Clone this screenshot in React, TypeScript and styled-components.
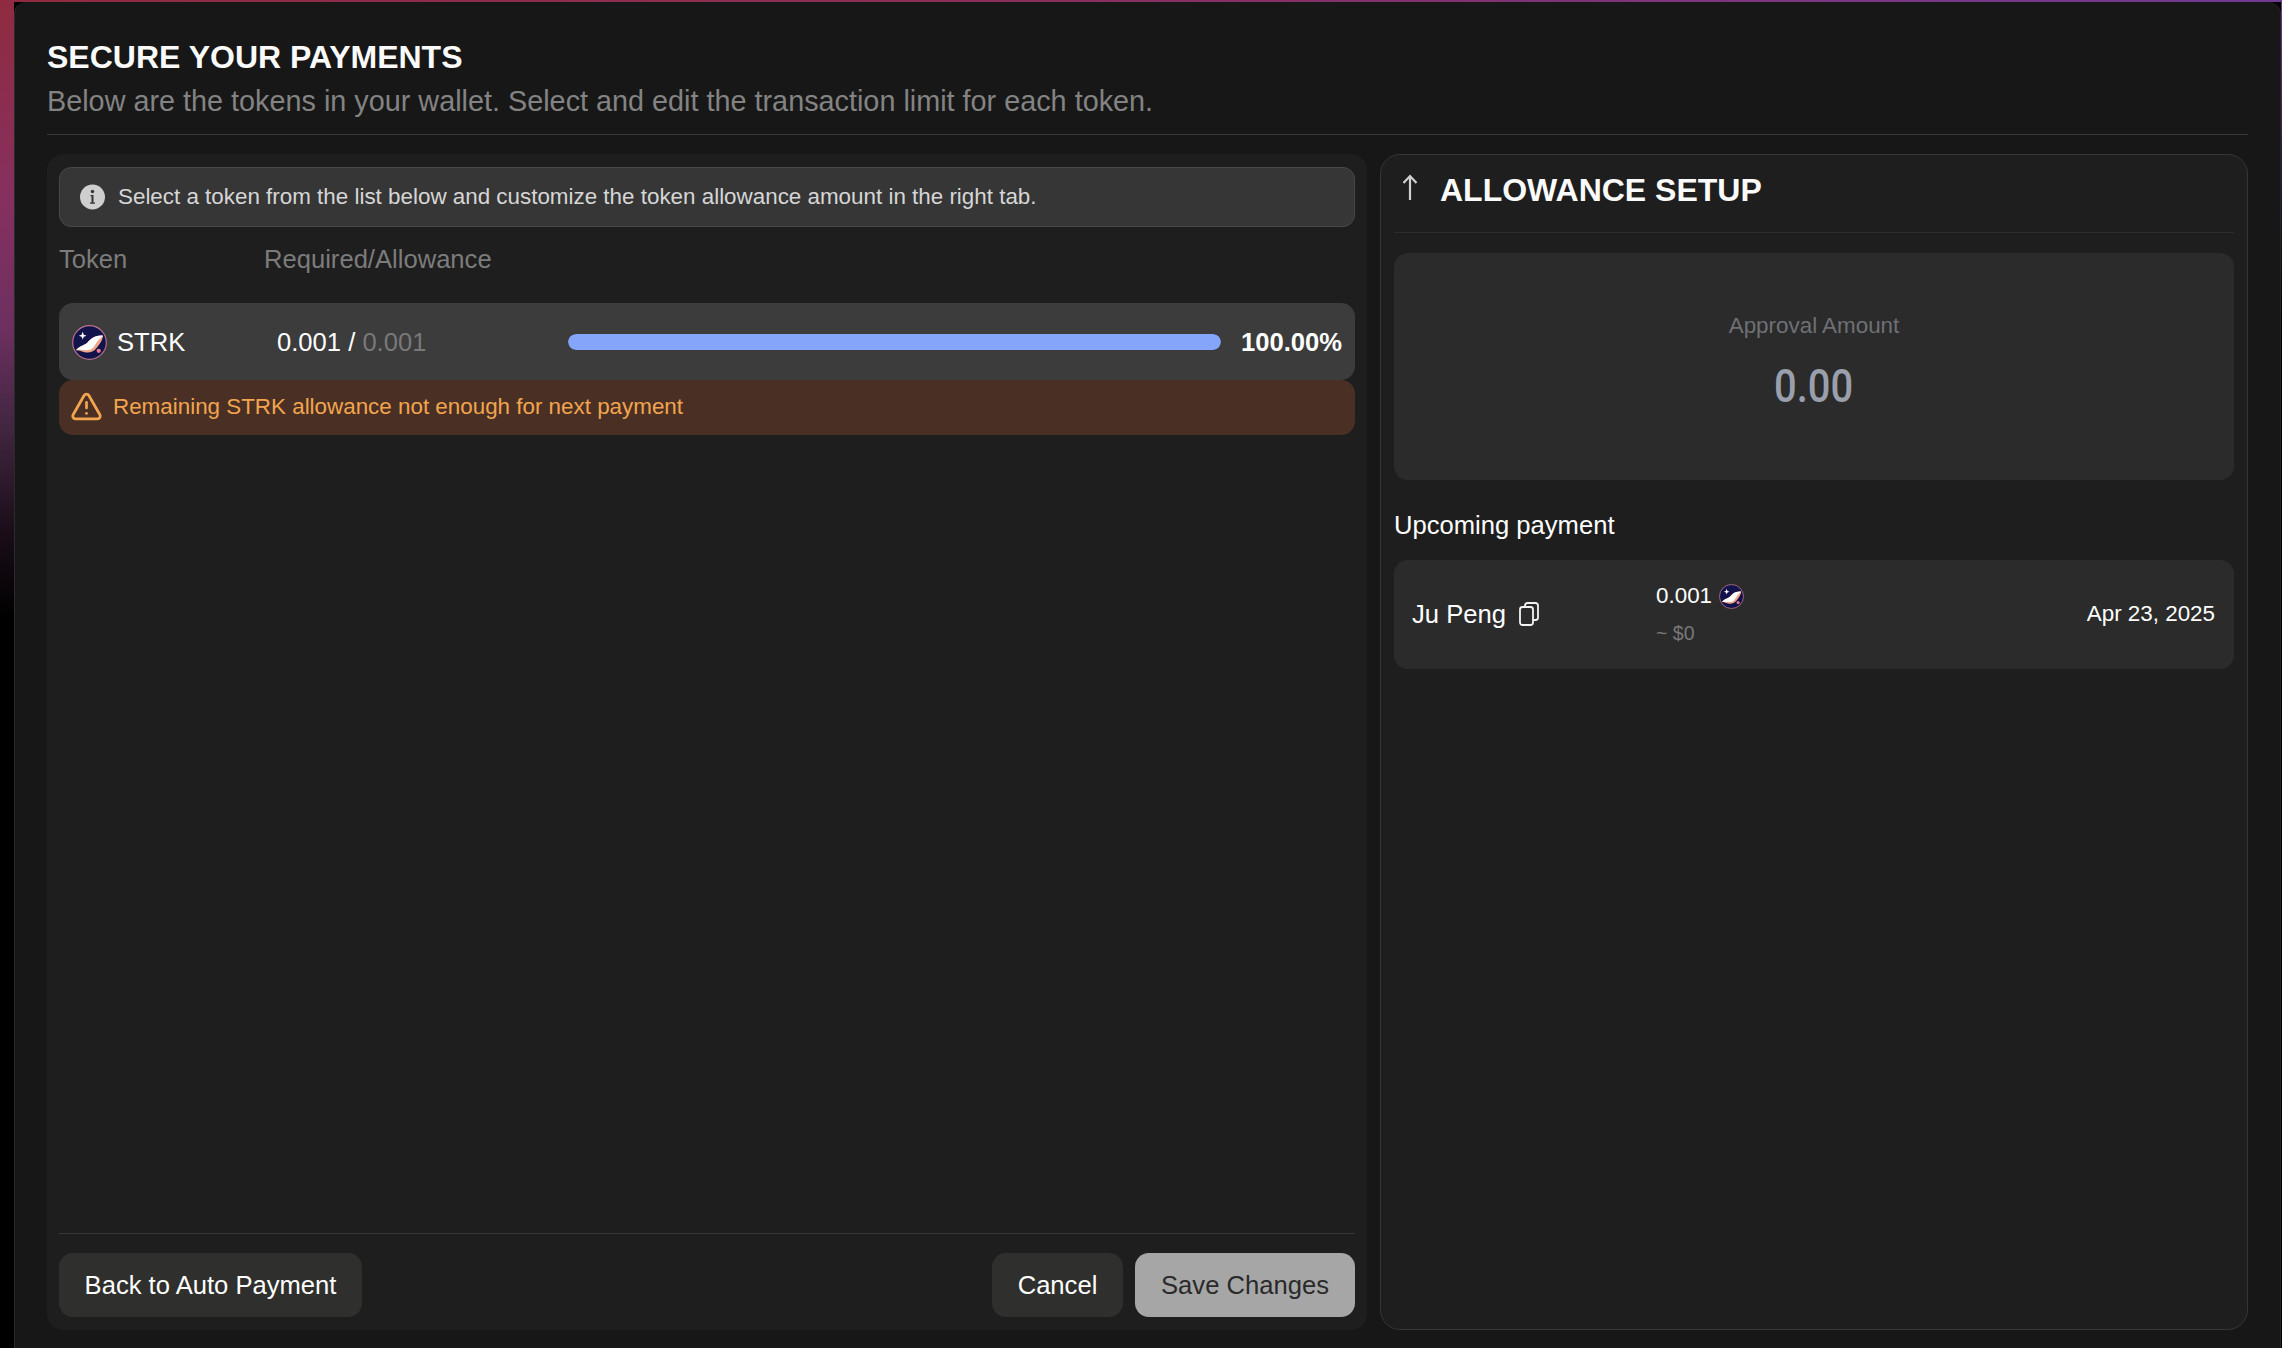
import React from "react";
import styled, { createGlobalStyle } from "styled-components";
import { TriangleAlert } from "lucide-react";

const Global = createGlobalStyle`
  html, body { margin: 0; padding: 0; height: 100%; background: #000; overflow: hidden; }
  body { font-family: "Liberation Sans", Arial, sans-serif; }
  * { box-sizing: border-box; }
`;

const Desktop = styled.div`
  width: 2282px;
  height: 1348px;
  padding: 2px 1px 0 14px;
  overflow: hidden;
  background:
    linear-gradient(90deg, #8f2b40 0%, #8c2f58 40%, #7f3478 70%, #6f3a93 100%) top / 100% 2px no-repeat,
    linear-gradient(180deg, #6f3a93 0, #2a1636 180px, #000 340px) right / 1px 100% no-repeat,
    linear-gradient(180deg, #8f2b40 0, #86305f 200px, #6c3060 330px, #40263f 430px, #1a0d18 533px, #000 620px) left / 14px 100% no-repeat,
    #000;
`;

const Modal = styled.main`
  height: 1346px;
  padding: 0 32px;
  background: #171717;
  border-left: 1px solid #2a2a2a;
  border-right: 1px solid #242424;
  border-radius: 12px 12px 0 0;
  display: flex;
  flex-direction: column;
`;

const Header = styled.header`
  height: 133px;
  padding-top: 35px;
  border-bottom: 1px solid #3a3a3a;
  flex: none;
`;

const Title = styled.h1`
  margin: 0;
  font-size: 32px;
  line-height: 40px;
  font-weight: 700;
  color: #fafafa;
`;

const Subtitle = styled.p`
  margin: 6px 0 0;
  font-size: 28.8px;
  line-height: 36px;
  color: #838383;
`;

const Columns = styled.div`
  margin-top: 19px;
  height: 1176px;
  display: grid;
  grid-template-columns: 1320px 868px;
  column-gap: 13px;
`;

const LeftPanel = styled.section`
  background: #1e1e1e;
  border-radius: 16px;
  padding: 13px 12px 13px;
  display: flex;
  flex-direction: column;
`;

const InfoBox = styled.div`
  height: 60px;
  background: #363636;
  border: 1px solid #484848;
  border-radius: 12px;
  padding: 0 20px;
  display: flex;
  align-items: center;
  gap: 13px;
  font-size: 22.4px;
  color: #d6d6d6;
`;

const TableHead = styled.div`
  margin-top: 15px;
  height: 34px;
  display: flex;
  font-size: 25.6px;
  line-height: 34px;
  color: #7c7c7c;
`;

const HeadCell = styled.div<{ $width?: number }>`
  width: ${(p) => (p.$width ? `${p.$width}px` : "auto")};
`;

const TokenRow = styled.div`
  margin-top: 27px;
  height: 77px;
  background: #3c3c3c;
  border-radius: 14px;
  padding: 1px 13px 0;
  display: flex;
  align-items: center;
  color: #fff;
  font-size: 25.6px;
`;

const TokenName = styled.div`
  width: 205px;
  display: flex;
  align-items: center;
  gap: 10px;
`;

const Amount = styled.div`
  width: 291px;
`;

const Muted = styled.span`
  color: #787878;
`;

const Track = styled.div`
  width: 653px;
  height: 16px;
  margin-top: -1px;
  border-radius: 8px;
  background: #3c3c3c;
  overflow: hidden;
  flex: none;
`;

const Fill = styled.div`
  height: 100%;
  background: #84a5f9;
  border-radius: 8px;
`;

const Percent = styled.div`
  margin-left: auto;
  font-weight: 700;
`;

const Warning = styled.div`
  height: 55px;
  background: #4a3024;
  border-radius: 14px;
  padding: 0 11px 2px;
  display: flex;
  align-items: center;
  gap: 10px;
  color: #f2a54e;
  font-size: 22.4px;
`;

const Footer = styled.footer`
  margin-top: auto;
  padding-top: 19px;
  border-top: 1px solid #383838;
  display: flex;
  align-items: center;
  gap: 12px;
`;

const Button = styled.button<{ $primary?: boolean; $width: number }>`
  width: ${(p) => p.$width}px;
  height: 64px;
  border: 0;
  border-radius: 14px;
  padding: 0;
  font-family: inherit;
  font-size: 25.6px;
  background: ${(p) => (p.$primary ? "#a6a6a6" : "#2f2f2d")};
  color: ${(p) => (p.$primary ? "#2a2a2a" : "#fff")};
`;

const Spacer = styled.div`
  flex: 1;
`;

const RightPanel = styled.aside`
  background: #1e1e1e;
  border: 1px solid #363636;
  border-radius: 20px;
  padding: 0 13px;
  display: flex;
  flex-direction: column;
`;

const SetupHeader = styled.div`
  height: 78px;
  border-bottom: 1px solid #2c2c2c;
  display: flex;
  align-items: center;
  gap: 22px;
  padding: 0 0 7px 8px;
`;

const ArrowSlot = styled.div`
  display: flex;
  margin-bottom: 6px;
`;

const SetupTitle = styled.h2`
  margin: 0;
  font-size: 32px;
  font-weight: 700;
  color: #fafafa;
`;

const ApprovalBox = styled.div`
  margin-top: 20px;
  height: 227px;
  border-radius: 14px;
  background: #2b2b2b;
  display: flex;
  flex-direction: column;
  align-items: center;
  padding-top: 59px;
`;

const ApprovalLabel = styled.div`
  font-size: 22.4px;
  line-height: 28px;
  color: #6f7075;
`;

const ApprovalValue = styled.div`
  margin-top: 18px;
  font-family: Roboto, "Liberation Sans", sans-serif;
  font-size: 47px;
  line-height: 56px;
  font-weight: 500;
  color: #9a9fac;
  transform: scaleX(0.85);
`;

const SectionTitle = styled.div`
  margin-top: 29px;
  font-size: 25.6px;
  line-height: 32px;
  color: #fff;
`;

const PaymentCard = styled.div`
  margin-top: 19px;
  height: 109px;
  border-radius: 14px;
  background: #2b2b2b;
  padding: 0 19px 0 18px;
  display: flex;
  align-items: center;
  color: #fff;
`;

const Payee = styled.div`
  width: 244px;
  margin-top: -1px;
  display: flex;
  align-items: center;
  gap: 13px;
  font-size: 25.6px;
`;

const PayAmount = styled.div`
  display: flex;
  flex-direction: column;
  gap: 12px;
  margin-top: -3px;
`;

const PayTop = styled.div`
  display: flex;
  align-items: center;
  gap: 7px;
  font-size: 22.4px;
  line-height: 28px;
`;

const PayFiat = styled.div`
  font-size: 19.5px;
  line-height: 22px;
  color: #787878;
`;

const PayDate = styled.div`
  margin-left: auto;
  margin-top: -1px;
  font-size: 22.4px;
`;

const StrkIcon = ({ size }: { size: number }) => (
  <svg width={size} height={size} viewBox="0 0 36 36" style={{ flex: "none" }}>
    <circle cx="18" cy="18" r="17.3" fill="#12134a" stroke="#b9708a" strokeWidth="1.2" />
    <path d="M4 26c4-5 9-5 12-8s7-8 16-7c-1 6-4 9-7 13s-8 5-12 4-6-2-9-2z" fill="#f0a68a" />
    <path d="M4 26c4-5 9-5 12-8s7-8 16-7c-3 3-6 5-8 9s-5 6-9 6-7-1-11 0z" fill="#fff" />
    <path d="M11 7l1.100 2.900 2.900 1.100-2.900 1.100-1.100 2.900-1.100-2.900-2.900-1.100 2.900-1.100z" fill="#fff" />
    <circle cx="27.500" cy="26.500" r="2.200" fill="#ea7a8a" />
  </svg>
);

const InfoIcon = () => (
  <svg width="25" height="26" viewBox="0 0 25 26" style={{ flex: "none" }}>
    <circle cx="12.500" cy="13" r="12.500" fill="#cfcfcf" />
    <circle cx="12.500" cy="7.500" r="1.700" fill="#363636" />
    <path d="M10.500 11h3v7.500h1.500v1.200h-5v-1.200h1.500v-6.300h-1z" fill="#363636" />
  </svg>
);

const UpArrow = () => (
  <svg width="16" height="26" viewBox="0 0 16 26" fill="none" stroke="#d0d0d0" strokeWidth="2.200" style={{ flex: "none" }}>
    <path d="M8 26V2M1.500 9L8 2l6.500 7" />
  </svg>
);

const CopyIcon = () => (
  <svg width="20" height="24" viewBox="0 0 20 24" fill="none" stroke="#f2f2f2" strokeWidth="1.800" style={{ flex: "none" }}>
    <rect x="1" y="5" width="13" height="18" rx="2.500" />
    <path d="M6 5V3.500A2.500 2.500 0 0 1 8.500 1H16.500A2.500 2.500 0 0 1 19 3.500V15.500A2.500 2.500 0 0 1 16.500 18H14" />
  </svg>
);

export default function App() {
  return (
    <Desktop>
      <Global />
      <Modal>
        <Header>
          <Title>SECURE YOUR PAYMENTS</Title>
          <Subtitle>Below are the tokens in your wallet. Select and edit the transaction limit for each token.</Subtitle>
        </Header>
        <Columns>
          <LeftPanel>
            <InfoBox>
              <InfoIcon />
              Select a token from the list below and customize the token allowance amount in the right tab.
            </InfoBox>
            <TableHead>
              <HeadCell $width={205}>Token</HeadCell>
              <HeadCell>Required/Allowance</HeadCell>
            </TableHead>
            <TokenRow>
              <TokenName>
                <StrkIcon size={35} />
                STRK
              </TokenName>
              <Amount>
                0.001 / <Muted>0.001</Muted>
              </Amount>
              <Track>
                <Fill style={{ width: "100%" }} />
              </Track>
              <Percent>100.00%</Percent>
            </TokenRow>
            <Warning>
              <TriangleAlert size={33} strokeWidth={2} />
              Remaining STRK allowance not enough for next payment
            </Warning>
            <Footer>
              <Button $width={303}>Back to Auto Payment</Button>
              <Spacer />
              <Button $width={131}>Cancel</Button>
              <Button $primary $width={220}>Save Changes</Button>
            </Footer>
          </LeftPanel>
          <RightPanel>
            <SetupHeader>
              <ArrowSlot>
                <UpArrow />
              </ArrowSlot>
              <SetupTitle>ALLOWANCE SETUP</SetupTitle>
            </SetupHeader>
            <ApprovalBox>
              <ApprovalLabel>Approval Amount</ApprovalLabel>
              <ApprovalValue>0.00</ApprovalValue>
            </ApprovalBox>
            <SectionTitle>Upcoming payment</SectionTitle>
            <PaymentCard>
              <Payee>
                Ju Peng
                <CopyIcon />
              </Payee>
              <PayAmount>
                <PayTop>
                  0.001
                  <StrkIcon size={25} />
                </PayTop>
                <PayFiat>~ $0</PayFiat>
              </PayAmount>
              <PayDate>Apr 23, 2025</PayDate>
            </PaymentCard>
          </RightPanel>
        </Columns>
      </Modal>
    </Desktop>
  );
}
